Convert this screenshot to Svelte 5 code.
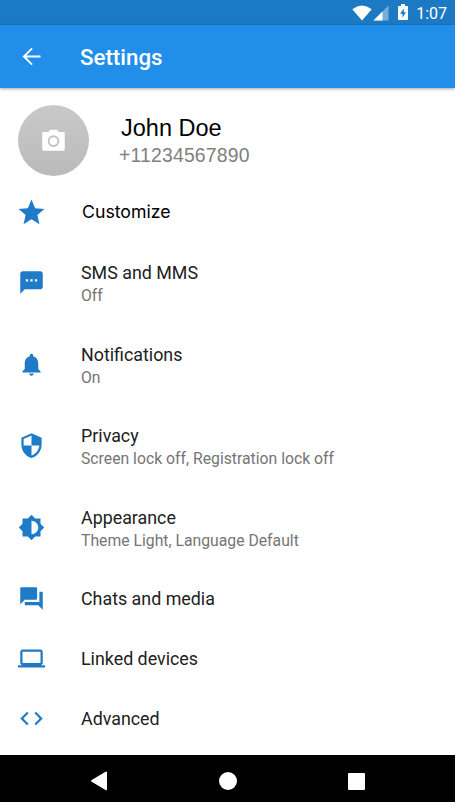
<script>
  const items = [
    { title: 'Customize', cls: 'customize', icon: 'star' },
    { title: 'SMS and MMS', sub: 'Off', icon: 'sms' },
    { title: 'Notifications', sub: 'On', icon: 'bell' },
    { title: 'Privacy', sub: 'Screen lock off, Registration lock off', icon: 'shield' },
    { title: 'Appearance', sub: 'Theme Light, Language Default', icon: 'brightness' },
    { title: 'Chats and media', icon: 'forum' },
    { title: 'Linked devices', icon: 'laptop' },
    { title: 'Advanced', icon: 'code' }
  ];

  const paths = {
    star: 'M12 17.27L18.18 21l-1.64-7.03L22 9.24l-7.19-.61L12 2 9.19 8.63 2 9.24l5.46 4.73L5.82 21z',
    sms: 'M20 2H4c-1.1 0-1.99.9-1.99 2L2 22l4-4h14c1.1 0 2-.9 2-2V4c0-1.1-.9-2-2-2zM9 11H7V9h2v2zm4 0h-2V9h2v2zm4 0h-2V9h2v2z',
    bell: 'M12 22c1.1 0 2-.9 2-2h-4c0 1.1.89 2 2 2zm6-6v-5c0-3.07-1.64-5.64-4.5-6.32V4c0-.83-.67-1.5-1.5-1.5s-1.5.67-1.5 1.5v.68C7.63 5.36 6 7.92 6 11v5l-2 2v1h16v-1l-2-2z',
    shield: 'M12 1L3 5v6c0 5.55 3.84 10.74 9 12 5.16-1.26 9-6.45 9-12V5l-9-4zm0 10.99h7c-.53 4.12-3.28 7.79-7 8.94V12H5V6.3l7-3.11v8.8z',
    brightness: 'M20 15.31L23.31 12 20 8.69V4h-4.69L12 .69 8.69 4H4v4.69L.69 12 4 15.31V20h4.69L12 23.31 15.31 20H20v-4.69zM12 18V6c3.31 0 6 2.69 6 6s-2.69 6-6 6z',
    forum: 'M21 6h-2v9H6v2c0 .55.45 1 1 1h11l4 4V7c0-.55-.45-1-1-1zm-4 6V3c0-.55-.45-1-1-1H3c-.55 0-1 .45-1 1v14l4-4h10c.55 0 1-.45 1-1z',
    laptop: 'M20 18c1.1 0 1.99-.9 1.99-2L22 6c0-1.1-.9-2-2-2H4c-1.1 0-2 .9-2 2v10c0 1.1.9 2 2 2H0v2h24v-2h-4zM4 6h16v10H4V6z',
    code: 'M9.4 16.6L4.8 12l4.6-4.6L8 6l-6 6 6 6 1.4-1.4zm5.2 0l4.6-4.6-4.6-4.6L16 6l6 6-6 6-1.4-1.4z'
  };
</script>

<div class="screen">
  <div class="status">
    <svg class="wifi" width="20" height="16" viewBox="0 0 20 16"><path d="M.3 4.200Q10-3.200 19.700 4.200L10 15.500z" /></svg>
    <svg class="signal" width="16" height="16" viewBox="0 0 16 16"><path opacity=".4" d="M15.500.5v15H.5z" /><path d="M9.500 6.500v9H.5z" /></svg>
    <svg class="battery" width="10" height="17" viewBox="0 0 10 17"><path fill-rule="evenodd" d="M3 0h4v2h2q1 0 1 1v12q0 1-1 1H1q-1 0-1-1V3q0-1 1-1h2zM5.800 4.500L2 9.800h2.400v4L8 8.200H5.800z" /></svg>
    <span>1:07</span>
  </div>
  <header>
    <svg width="27" height="27" viewBox="0 0 24 24"><path d="M20 11.200H7.400l5.700-5.900L12 4.200l-8 7.800 8 7.800 1.100-1.100-5.700-5.900H20z" /></svg>
    <h1>Settings</h1>
  </header>
  <main>
    <section class="profile">
      <div class="avatar">
        <svg width="27" height="27" viewBox="0 0 24 24"><path fill-rule="evenodd" d="M9 2.500L7.170 4.500H3q-1 0-1 1V20q0 1 1 1h18q1 0 1-1V5.500q0-1-1-1h-4.170L15 2.500zm3 15.200a5.200 5.200 0 1 1 0-10.400 5.200 5.200 0 0 1 0 10.400zm0-1.700a3.500 3.500 0 1 0 0-7 3.500 3.500 0 0 0 0 7z" /></svg>
      </div>
      <div class="who">
        <div class="name">John Doe</div>
        <div class="phone">+11234567890</div>
      </div>
    </section>
    {#each items as item}
      <div class="row {item.cls ?? ''}" class:double={item.sub}>
        <div class="icon"><svg viewBox="0 0 24 24"><path d={paths[item.icon]} /></svg></div>
        <div class="text">
          <div class="title">{item.title}</div>
          {#if item.sub}<div class="sub">{item.sub}</div>{/if}
        </div>
      </div>
    {/each}
  </main>
  <nav>
    <svg width="16" height="20" viewBox="0 0 16 20"><path d="M14.500.8Q16 0 16 1.500v16.800q0 1.500-1.500.7L.7 10.700q-1.200-.8 0-1.600z" /></svg>
    <svg width="18" height="18" viewBox="0 0 18 18"><circle cx="9" cy="9" r="9" /></svg>
    <svg width="17" height="17" viewBox="0 0 17 17"><rect width="17" height="17" rx="1" /></svg>
  </nav>
</div>

<style>
  .screen {
    width: 455px;
    height: 802px;
    display: flex;
    flex-direction: column;
    background: #fff;
    font-family: Roboto, sans-serif;
    overflow: hidden;
  }
  svg { display: block; fill: #fff; flex: none; }
  .status {
    height: 25px;
    box-sizing: border-box;
    padding-right: 8px;
    display: flex;
    justify-content: flex-end;
    align-items: center;
    background: #1c7ac5;
    color: #fff;
    font-size: 16px;
    flex: none;
  }
  .signal { margin-left: 1px; }
  .battery { margin: 0 8px 0 9px; }
  .status span { line-height: 25px; padding-top: 2px; }
  header {
    height: 63px;
    box-sizing: border-box;
    padding: 0 0 0 18px;
    display: flex;
    align-items: center;
    background: #218fea;
    box-shadow: 0 1px 3px rgba(0, 0, 0, .35);
    flex: none;
  }
  h1 {
    margin: 1px 0 0 35px;
    color: #fff;
    font-size: 22.3px;
    line-height: 28px;
    font-weight: 500;
  }
  main { flex: 1; }
  .profile {
    height: 94px;
    box-sizing: border-box;
    padding: 17px 0 0 18px;
    display: flex;
  }
  .avatar {
    width: 71px;
    height: 71px;
    border-radius: 50%;
    background: linear-gradient(#c9c9c9, #bababa);
    display: flex;
    align-items: center;
    justify-content: center;
  }
  .who { margin-left: 30px; padding-top: 9px; font-family: "Liberation Sans", sans-serif; }
  .name { padding-left: 2px; font-size: 23.5px; line-height: 28px; color: #000; }
  .phone { font-size: 19.4px; line-height: 27px; letter-spacing: .18px; color: #808080; }
  .row { height: 60px; display: flex; align-items: center; }
  .double { height: 81.5px; }
  .icon { width: 63px; margin-right: 18px; display: flex; justify-content: center; }
  .icon svg { width: 27px; height: 27px; fill: #1f7ac7; }
  .title { font-size: 17.85px; line-height: 23px; color: #212121; }
  .sub { font-size: 15.75px; line-height: 23px; color: #757575; }
  .double .text { padding-top: 3px; }
  .customize .icon svg { width: 31px; height: 31px; }
  .customize .title { padding: 0 0 2px 1px; font-family: Inter, sans-serif; font-size: 17.7px; color: #000; }
  nav {
    height: 47.5px;
    box-sizing: border-box;
    padding: 6px 90px 0 91px;
    display: flex;
    align-items: center;
    justify-content: space-between;
    background: #000;
    flex: none;
  }
</style>
